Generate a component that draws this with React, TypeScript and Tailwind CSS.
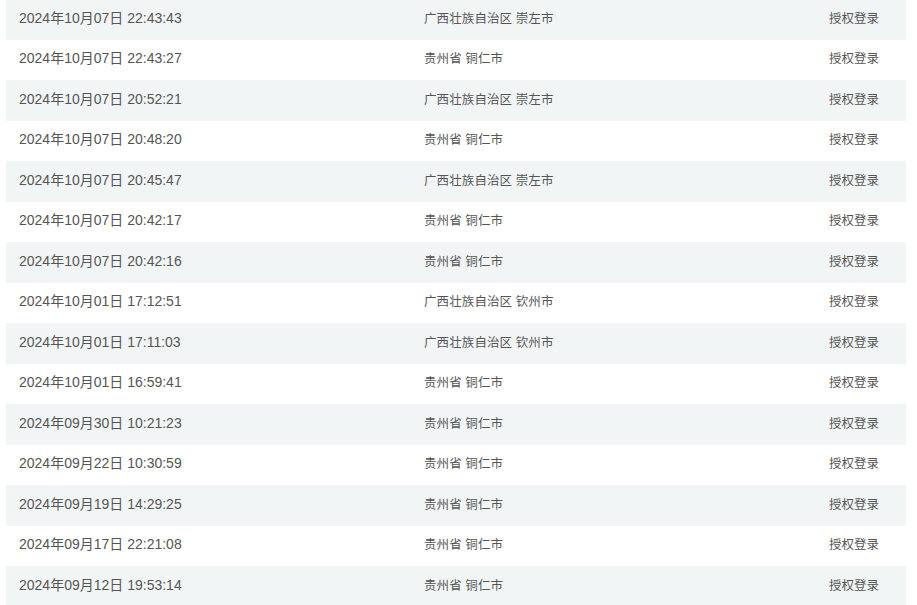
import React from "react";

const rows = [
  ["2024年10月07日 22:43:43", "广西壮族自治区 崇左市"],
  ["2024年10月07日 22:43:27", "贵州省 铜仁市"],
  ["2024年10月07日 20:52:21", "广西壮族自治区 崇左市"],
  ["2024年10月07日 20:48:20", "贵州省 铜仁市"],
  ["2024年10月07日 20:45:47", "广西壮族自治区 崇左市"],
  ["2024年10月07日 20:42:17", "贵州省 铜仁市"],
  ["2024年10月07日 20:42:16", "贵州省 铜仁市"],
  ["2024年10月01日 17:12:51", "广西壮族自治区 钦州市"],
  ["2024年10月01日 17:11:03", "广西壮族自治区 钦州市"],
  ["2024年10月01日 16:59:41", "贵州省 铜仁市"],
  ["2024年09月30日 10:21:23", "贵州省 铜仁市"],
  ["2024年09月22日 10:30:59", "贵州省 铜仁市"],
  ["2024年09月19日 14:29:25", "贵州省 铜仁市"],
  ["2024年09月17日 22:21:08", "贵州省 铜仁市"],
  ["2024年09月12日 19:53:14", "贵州省 铜仁市"],
];

export default function App() {
  return (
    <div
      className="bg-white w-[917px] h-[605px] overflow-hidden px-[6px]"
      style={{ fontFamily: '"Liberation Sans", "Noto Sans CJK SC", sans-serif' }}
    >
      <div className="-mt-px flex flex-col w-[900px]">
        {rows.map(([time, place], i) => (
          <div
            key={i}
            className={`flex items-center h-[40.5px] pb-[2px] text-[14px] text-[#555] ${
              i % 2 === 0 ? "bg-[#f2f5f6]" : "bg-white"
            }`}
          >
            <div className="w-[405px] pl-[13px]">{time}</div>
            <div className="w-[405px] pl-[13px] pt-[2px] text-[12.5px] tracking-[0.1px]">{place}</div>
            <div className="w-[90px] pl-[13px] pt-[2px] text-[12.5px]">授权登录</div>
          </div>
        ))}
      </div>
    </div>
  );
}
